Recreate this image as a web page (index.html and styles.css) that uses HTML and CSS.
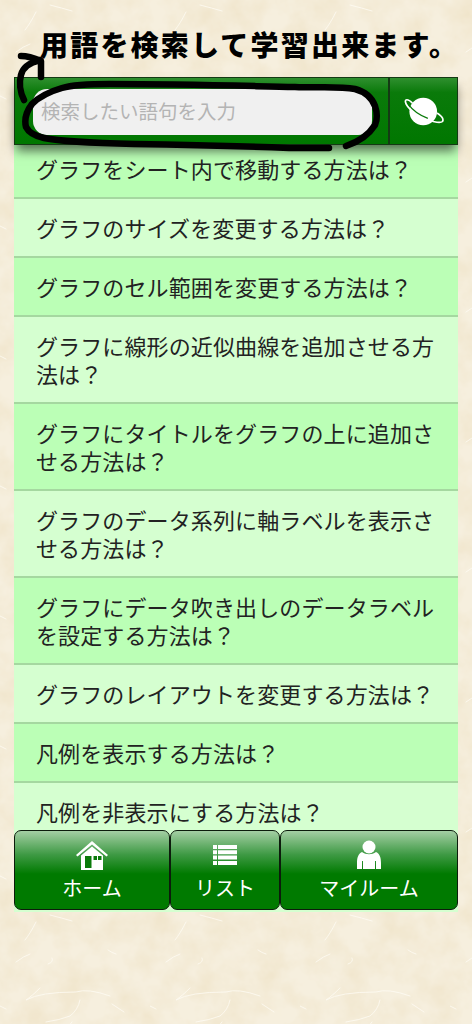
FILE: index.html
```html
<!DOCTYPE html>
<html lang="ja">
<head>
  <meta charset="UTF-8" />
  <title>用語検索</title>
  <link rel="stylesheet" href="styles.css">
</head>
<body>
  <!-- Paper texture -->
  <svg class="paper" width="472" height="1024" aria-hidden="true">
    <defs>
      <filter id="mottle" x="0" y="0" width="100%" height="100%">
        <feTurbulence type="fractalNoise" baseFrequency="0.035" numOctaves="4" seed="7"/>
        <feColorMatrix values="0 0 0 0 0.82  0 0 0 0 0.70  0 0 0 0 0.47  0.8 0 0 0 -0.26"/>
      </filter>
      <pattern id="fibres" width="150" height="130" patternUnits="userSpaceOnUse">
        <g fill="none" stroke="#fffdf6" stroke-width="0.9" stroke-linecap="round" opacity="0.8">
          <path d="M50 5q12 3 22 6"/>
          <path d="M36 12q-6 12-11 18"/>
          <path d="M16 52q8-6 14-8"/>
          <path d="M52 48q2 4 -4 6"/>
          <path d="M40 78q-8 8-14 12q14-8 50-8q12-4 34 4"/>
          <path d="M46 112q14-2 24-6q8-6 10-16"/>
          <path d="M0 96l6 3"/>
          <path d="M112 94q6 4 12 8"/>
          <path d="M108 40q4 3 8 4"/>
          <path d="M60 122q8-4 12-10"/>
        </g>
      </pattern>
    </defs>
    <rect width="472" height="1024" filter="url(#mottle)"/>
    <rect width="472" height="1024" fill="url(#fibres)"/>
  </svg>

  <div class="page">
    <h1 class="lead">用語を検索して学習出来ます。</h1>

    <div class="search-bar">
      <div class="search-cell">
        <input class="search-input" type="text" placeholder="検索したい語句を入力">
      </div>
      <button class="search-btn" aria-label="検索">
        <svg width="40" height="31" viewBox="0 0 52 40">
          <circle cx="25" cy="20" r="18" fill="#fff"/>
          <path d="M11 9C5 3 1 4 2 8c1 5 9 13 20 19 12 6 25 9 28 6 2-3-1-7-7-11" fill="none" stroke="#fff" stroke-width="2.200"/>
          <path d="M6 11c5 7 15 14 25 18" fill="none" stroke="#0a7a0a" stroke-width="1.600"/>
        </svg>
      </button>
    </div>

    <div class="sheet">
      <ul class="terms">
        <li class="term">グラフをシート内で移動する方法は？</li>
        <li class="term">グラフのサイズを変更する方法は？</li>
        <li class="term">グラフのセル範囲を変更する方法は？</li>
        <li class="term">グラフに線形の近似曲線を追加させる方法は？</li>
        <li class="term">グラフにタイトルをグラフの上に追加させる方法は？</li>
        <li class="term">グラフのデータ系列に軸ラベルを表示させる方法は？</li>
        <li class="term">グラフにデータ吹き出しのデータラベルを設定する方法は？</li>
        <li class="term">グラフのレイアウトを変更する方法は？</li>
        <li class="term">凡例を表示する方法は？</li>
        <li class="term">凡例を非表示にする方法は？</li>
      </ul>

      <nav class="tabs">
        <a class="tab tab-home">
          <svg width="34" height="30" viewBox="0 0 34 30">
            <path d="M17 1L1 15l1.500 1.500L17 4.500l14.500 12L33 15z" fill="#fff"/>
            <path d="M6 15.500L17 6.500l11 9V30H6z" fill="#fff"/>
            <rect x="10" y="16" width="6.500" height="12" fill="#0a7a0a"/>
            <rect x="18.500" y="16" width="3.500" height="4" fill="#0a7a0a"/>
            <rect x="23" y="16" width="3.500" height="4" fill="#0a7a0a"/>
          </svg>
          <span>ホーム</span>
        </a>
        <a class="tab tab-list">
          <svg width="24" height="20" viewBox="0 0 24 20">
            <path d="M0 0h4v4H0zM5 0h19v4H5zM0 5.300h4v4H0zM5 5.300h19v4H5zM0 10.600h4v4H0zM5 10.600h19v4H5zM0 15.900h4V20H0zM5 15.900h19V20H5z" fill="#fff"/>
          </svg>
          <span>リスト</span>
        </a>
        <a class="tab tab-room">
          <svg width="24" height="30" viewBox="0 0 24 30">
            <circle cx="12" cy="7" r="6.500" fill="#fff"/>
            <path d="M5 12C1 14 0 18 0 23v6h5v-8h1v8h12v-8h1v8h5v-6c0-5-1-9-5-11-4 3-10 3-14 0z" fill="#fff"/>
          </svg>
          <span>マイルーム</span>
        </a>
      </nav>
    </div>
  </div>

  <!-- Hand drawn marks over the search box -->
  <svg class="scribble" width="472" height="160" viewBox="0 0 472 160" aria-hidden="true">
    <g fill="none" stroke="#000" stroke-width="6.500" stroke-linecap="round" stroke-linejoin="round">
      <path d="M346 146c12-4 22-10 29-21 3-7 2-13 0-19-3-8-9-14-20-17-16-3-35-1-60-2-50-1-110-3-185-3-20 0-38 1-48 4-14 4-24 10-30 16-6 8-8 15-6 23 3 6 9 9 18 11 20 4 50 5 90 6 70 1 130 3 155 4 14 0 28 0 40 0"/>
      <path d="M24 100c-4-8-5-18-3-25 2-8 8-12 19-15"/>
      <path d="M21 56c6 0 13 2 20 5 0 4 0 11 0 16"/>
    </g>
  </svg>
</body>
</html>
```

FILE: styles.css
```css
/* Reset */
* {
  margin: 0; padding: 0; box-sizing: border-box;
}
html, body {
  height: 100%;
  overflow: hidden;
  background: #f6efde;
  font-family: "Noto Sans CJK JP", "Noto Sans", sans-serif;
}
body {
  position: relative;
}

/* Background layers */
.paper {
  position: absolute;
  top: 0; left: 0;
}
.scribble {
  position: absolute;
  top: 0; left: 0;
  pointer-events: none;
  z-index: 5;
}

.page {
  position: relative;
  width: 444px;
  margin-left: 14px;
  padding-top: 27px;
}

.lead {
  height: 50px;
  padding-left: 26px;
  font-size: 28px;
  font-weight: 900;
  line-height: 34px;
  letter-spacing: 2.200px;
  color: #000;
  white-space: nowrap;
}

/* Search bar */
.search-bar {
  position: relative;
  z-index: 2;
  display: flex;
  height: 68px;
  box-shadow: 0 8px 10px -2px rgba(0, 0, 0, 0.55);
}
.search-cell {
  flex: 1;
  padding: 11px 16px 11px 18px;
  background: linear-gradient(#2f8f2f, #0a7a0a 22%, #007700);
  border: 1px solid #143a14;
  border-right-width: 2px;
}
.search-input {
  display: block;
  width: 100%;
  height: 46px;
  padding: 0 8px 4px;
  border: none;
  border-radius: 14px;
  background: #f0f0f0;
  font-family: inherit;
  font-size: 19.500px;
  outline: none;
}
.search-input::placeholder {
  color: #b4b4b4;
}
.search-btn {
  display: flex;
  align-items: center;
  justify-content: center;
  width: 68px;
  background: linear-gradient(#2f8f2f, #0a7a0a 22%, #007700);
  border: 1px solid #143a14;
  border-left-width: 0;
}

/* Term list */
.sheet {
  height: 767px;
  background: #d5ffd0;
  display: flex;
  flex-direction: column;
  position: relative;
}
.terms {
  list-style: none;
  height: 685px;
  overflow: hidden;
  flex: none;
}
.term {
  padding: 14px 20px 15px 22px;
  font-size: 22px;
  line-height: 28px;
  letter-spacing: 0.120px;
  color: #222;
  border-bottom: 2px solid #a5d8a0;
  background: #d5ffd0;
}
.term:nth-child(odd) {
  background: #bbffb6;
}
.term:first-child {
  padding-top: 9px;
  height: 54px;
}
.term:last-child {
  border-bottom: none;
}

/* Bottom tabs */
.tabs {
  display: grid;
  grid-template-columns: 156px 110px 178px;
  height: 80px;
}
.tab {
  display: flex;
  flex-direction: column;
  align-items: center;
  height: 80px;
  padding-top: 9px;
  background: linear-gradient(#a4cfa4, #3f9a45 30%, #007a00 55%);
  border: 1.500px solid #0c1c0c;
  border-radius: 7px;
  color: #fff;
  font-size: 20px;
  line-height: 26px;
}
.tab svg {
  flex: none;
  height: 30px;
  margin-bottom: 5px;
}
.tab-list svg {
  margin-top: 5px;
  margin-bottom: 10px;
  height: 20px;
}
```
